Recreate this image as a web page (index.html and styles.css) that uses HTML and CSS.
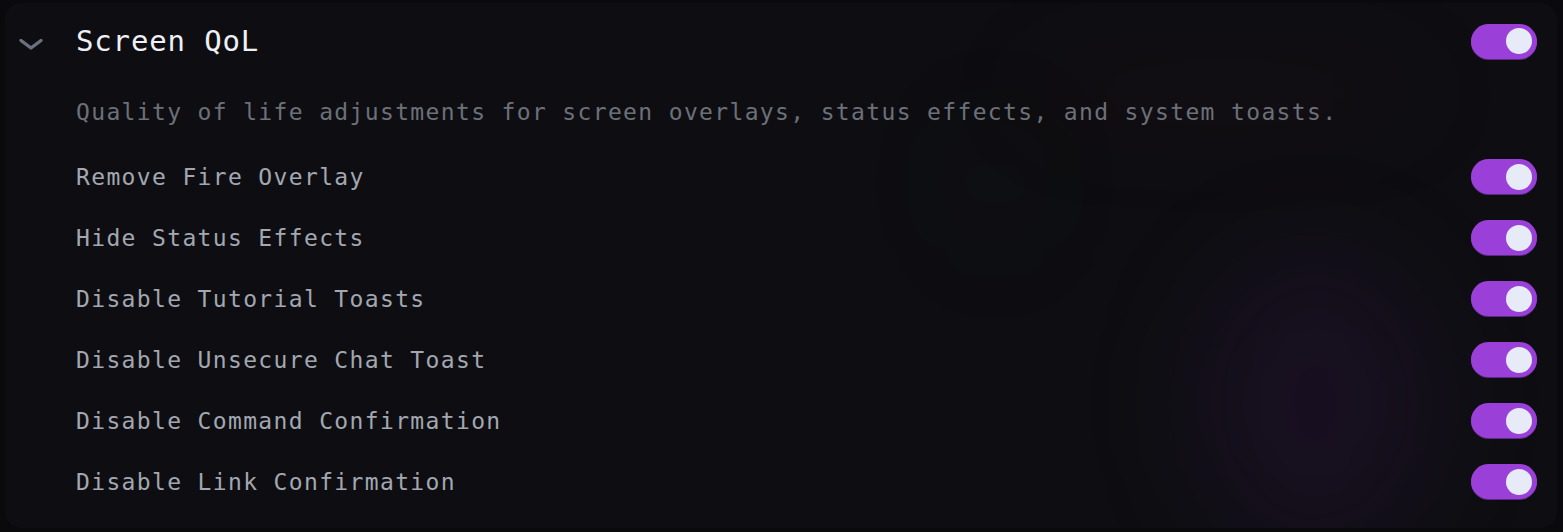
FILE: index.html
```html
<!DOCTYPE html>
<html lang="en">
<head>
<meta charset="utf-8">
<title>Screen QoL</title>
<link rel="stylesheet" href="styles.css">
</head>
<body>
<section class="card">
  <div class="glow glow-purple"></div>
  <div class="glow glow-red"></div>
  <div class="glow glow-green"></div>
  <header class="header">
    <span class="chevron">
      <svg width="26" height="14" viewBox="0 0 26 14" fill="none"><path d="M3 3.5 L13 11 L23 3.5" stroke="#6b7080" stroke-width="3.4" stroke-linecap="round" stroke-linejoin="round"/></svg>
    </span>
    <h2 class="title">Screen QoL</h2>
    <span class="toggle on"><span class="knob"></span></span>
  </header>
  <div class="body">
    <p class="desc">Quality of life adjustments for screen overlays, status effects, and system toasts.</p>
    <ul class="rows">
      <li class="row"><span class="label">Remove Fire Overlay</span><span class="toggle on"><span class="knob"></span></span></li>
      <li class="row"><span class="label">Hide Status Effects</span><span class="toggle on"><span class="knob"></span></span></li>
      <li class="row"><span class="label">Disable Tutorial Toasts</span><span class="toggle on"><span class="knob"></span></span></li>
      <li class="row"><span class="label">Disable Unsecure Chat Toast</span><span class="toggle on"><span class="knob"></span></span></li>
      <li class="row"><span class="label">Disable Command Confirmation</span><span class="toggle on"><span class="knob"></span></span></li>
      <li class="row"><span class="label">Disable Link Confirmation</span><span class="toggle on"><span class="knob"></span></span></li>
    </ul>
  </div>
</section>
</body>
</html>
```
FILE: styles.css
```css
* { box-sizing: border-box; }
html, body { margin: 0; padding: 0; }
body {
  background: #0a0a0c;
  width: 1563px;
  height: 532px;
  overflow: hidden;
  font-family: "DejaVu Sans Mono", "Liberation Mono", monospace;
}
.card {
  position: relative;
  overflow: hidden;
  margin: 3px 0 0 5px;
  width: 1552px;
  height: 525px;
  border-radius: 16px;
  background: #0e0e12;
  padding: 16px 20px 0 13px;
}
.glow {
  position: absolute;
  border-radius: 50%;
  filter: blur(50px);
  pointer-events: none;
}
.glow-purple {
  left: 1190px; top: 250px; width: 240px; height: 300px;
  background: rgba(60, 25, 80, 0.22);
}
.glow-red {
  left: 1010px; top: 70px; width: 420px; height: 40px;
  background: rgba(90, 20, 20, 0.12);
}
.glow-green {
  left: 960px; top: 110px; width: 60px; height: 140px;
  background: rgba(30, 60, 30, 0.08);
}
.header {
  position: relative;
  display: flex;
  align-items: center;
  height: 44px;
}
.chevron {
  display: flex;
  align-items: center;
  justify-content: center;
  width: 26px;
  height: 24px;
  margin-right: 32px;
  padding-top: 5px;
}
.title {
  flex: 1;
  margin: 0;
  font-size: 29px;
  font-weight: 500;
  letter-spacing: 0.85px;
  color: #eef0f6;
}
.toggle {
  position: relative;
  display: flex;
  align-items: center;
  justify-content: flex-end;
  width: 66px;
  height: 35px;
  padding-right: 5px;
  border-radius: 18px;
  background: #9a40d8;
  box-shadow: 0 1px 0 #5b2a85;
  flex-shrink: 0;
}
.knob {
  width: 26px;
  height: 26px;
  border-radius: 50%;
  background: #e6ebf7;
}
.body {
  position: relative;
  padding-left: 58px;
}
.desc {
  margin: 34px 0 0;
  height: 30px;
  line-height: 30px;
  font-size: 23px;
  letter-spacing: 1.35px;
  color: #6c7079;
}
.rows {
  list-style: none;
  margin: 19px 0 0;
  padding: 0;
}
.row {
  display: flex;
  align-items: center;
  justify-content: space-between;
  height: 61px;
}
.label {
  font-size: 23px;
  letter-spacing: 1.35px;
  color: #a2a7b1;
}
```
